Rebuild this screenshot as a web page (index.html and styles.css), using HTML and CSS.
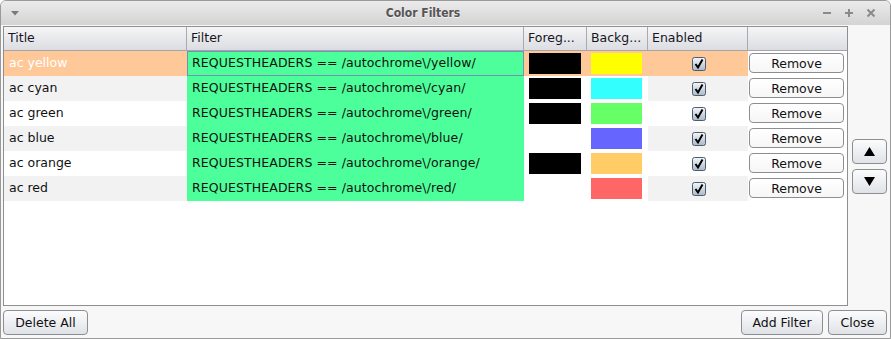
FILE: index.html
```html
<!DOCTYPE html>
<html>
<head>
<meta charset="utf-8">
<link rel="stylesheet" href="styles.css">
</head>
<body>
<div class="window">
  <div class="titlebar">
    <div class="tb-left">
      <svg width="8" height="5" viewBox="0 0 8 5"><path d="M0 0 H8 L4 4.5 Z" fill="#7a7a7a"/></svg>
    </div>
    <div class="tb-title">Color Filters</div>
    <div class="tb-right">
      <svg width="10" height="10" viewBox="0 0 10 10"><path d="M1 5 H9" stroke="#8a8a8a" stroke-width="2"/></svg>
      <svg width="10" height="10" viewBox="0 0 10 10"><path d="M1 5 H9 M5 1 V9" stroke="#8a8a8a" stroke-width="2"/></svg>
      <svg width="10" height="10" viewBox="0 0 10 10"><path d="M1.5 1.5 L8.5 8.5 M8.5 1.5 L1.5 8.5" stroke="#8a8a8a" stroke-width="2"/></svg>
    </div>
  </div>
  <div class="content">
    <div class="main">
      <div class="table">
        <div class="thead">
          <div class="th">Title</div>
          <div class="th">Filter</div>
          <div class="th">Foreg...</div>
          <div class="th">Backg...</div>
          <div class="th">Enabled</div>
          <div class="th last"></div>
        </div>
        <div class="tbody">
          <div class="row sel">
            <div class="td title">ac yellow</div>
            <div class="td filter focus">REQUESTHEADERS == /autochrome\/yellow/</div>
            <div class="td fg"><span class="sw fgsw" style="background:#000000"></span></div>
            <div class="td bg"><span class="sw bgsw" style="background:#ffff00"></span></div>
            <div class="td en"><svg class="cb" width="14" height="14" viewBox="0 0 14 14"><use href="#cbox"/></svg></div>
            <div class="td rm"><button class="btn remove">Remove</button></div>
          </div>
          <div class="row alt">
            <div class="td title">ac cyan</div>
            <div class="td filter">REQUESTHEADERS == /autochrome\/cyan/</div>
            <div class="td fg"><span class="sw fgsw" style="background:#000000"></span></div>
            <div class="td bg"><span class="sw bgsw" style="background:#33ffff"></span></div>
            <div class="td en"><svg class="cb" width="14" height="14" viewBox="0 0 14 14"><use href="#cbox"/></svg></div>
            <div class="td rm"><button class="btn remove">Remove</button></div>
          </div>
          <div class="row">
            <div class="td title">ac green</div>
            <div class="td filter">REQUESTHEADERS == /autochrome\/green/</div>
            <div class="td fg"><span class="sw fgsw" style="background:#000000"></span></div>
            <div class="td bg"><span class="sw bgsw" style="background:#66ff66"></span></div>
            <div class="td en"><svg class="cb" width="14" height="14" viewBox="0 0 14 14"><use href="#cbox"/></svg></div>
            <div class="td rm"><button class="btn remove">Remove</button></div>
          </div>
          <div class="row alt">
            <div class="td title">ac blue</div>
            <div class="td filter">REQUESTHEADERS == /autochrome\/blue/</div>
            <div class="td fg"></div>
            <div class="td bg"><span class="sw bgsw" style="background:#6666ff"></span></div>
            <div class="td en"><svg class="cb" width="14" height="14" viewBox="0 0 14 14"><use href="#cbox"/></svg></div>
            <div class="td rm"><button class="btn remove">Remove</button></div>
          </div>
          <div class="row">
            <div class="td title">ac orange</div>
            <div class="td filter">REQUESTHEADERS == /autochrome\/orange/</div>
            <div class="td fg"><span class="sw fgsw" style="background:#000000"></span></div>
            <div class="td bg"><span class="sw bgsw" style="background:#ffcc66"></span></div>
            <div class="td en"><svg class="cb" width="14" height="14" viewBox="0 0 14 14"><use href="#cbox"/></svg></div>
            <div class="td rm"><button class="btn remove">Remove</button></div>
          </div>
          <div class="row alt">
            <div class="td title">ac red</div>
            <div class="td filter">REQUESTHEADERS == /autochrome\/red/</div>
            <div class="td fg"></div>
            <div class="td bg"><span class="sw bgsw" style="background:#ff6666"></span></div>
            <div class="td en"><svg class="cb" width="14" height="14" viewBox="0 0 14 14"><use href="#cbox"/></svg></div>
            <div class="td rm"><button class="btn remove">Remove</button></div>
          </div>
        </div>
      </div>
      <div class="side">
        <button class="btn arrow"><svg width="11" height="9" viewBox="0 0 11 9"><path d="M5.5 0 L11 9 H0 Z" fill="#000"/></svg></button>
        <button class="btn arrow"><svg width="11" height="9" viewBox="0 0 11 9"><path d="M0 0 H11 L5.5 9 Z" fill="#000"/></svg></button>
      </div>
    </div>
    <div class="footer">
      <button class="btn fbtn delete">Delete All</button>
      <div class="spacer"></div>
      <button class="btn fbtn add">Add Filter</button>
      <button class="btn fbtn close">Close</button>
    </div>
  </div>
</div>
<svg width="0" height="0" class="defs">
  <defs>
    <linearGradient id="cbg" x1="0" y1="0" x2="0" y2="1">
      <stop offset="0" stop-color="#f4f7fa"/>
      <stop offset="1" stop-color="#a9b8c8"/>
    </linearGradient>
    <g id="cbox">
      <rect x="0.5" y="0.5" width="13" height="13" rx="2" fill="url(#cbg)" stroke="#4d5d6e"/>
      <path d="M3.5 7 L6 10.5 L10.5 2.5" fill="none" stroke="#000" stroke-width="2"/>
    </g>
  </defs>
</svg>
</body>
</html>
```

FILE: styles.css
```css
* { box-sizing: border-box; }
html, body { margin: 0; padding: 0; }
body {
  width: 891px;
  height: 339px;
  font-family: "DejaVu Sans", sans-serif;
  font-size: 12.5px;
  color: #111;
  background: #ffffff;
}
.defs { position: absolute; }
.window {
  width: 891px;
  height: 339px;
  border: 1px solid #9a9a9a;
  border-radius: 6px 6px 0 0;
  background: #f7f7f7;
  display: flex;
  flex-direction: column;
  overflow: hidden;
}
.titlebar {
  height: 24px;
  flex: none;
  display: flex;
  align-items: center;
  background: linear-gradient(#ebebeb, #d3d3d3);
}
.tb-left {
  width: 28px;
  padding-left: 10px;
  display: flex;
  align-items: center;
  padding-top: 1px;
}
.tb-title {
  flex: 1;
  text-align: center;
  font-family: "DejaVu Sans Condensed", "DejaVu Sans", sans-serif;
  font-stretch: condensed;
  font-size: 12px;
  font-weight: bold;
  color: #555;
  text-shadow: 0 1px 0 #f4f4f4;
  padding-right: 4px;
}
.tb-right {
  width: 69px;
  display: flex;
  gap: 12px;
  align-items: center;
  padding-left: 1px;
}
.content {
  flex: 1;
  display: flex;
  flex-direction: column;
  padding: 1px 2px 3px 2px;
}
.main {
  flex: 1;
  display: flex;
}
.table {
  width: 845px;
  border: 1px solid #8f8f8f;
  background: #fff;
  display: flex;
  flex-direction: column;
}
.thead, .row {
  display: grid;
  grid-template-columns: 183px 337px 63px 61px 100px 99px;
}
.thead {
  height: 23px;
  background: linear-gradient(#f5f5f7, #dcdde2);
  border-bottom: 1px solid #a5a6aa;
  box-sizing: content-box;
}
.th {
  border-right: 1px solid #a9aaae;
  padding-left: 4px;
  line-height: 22px;
  color: #161622;
  white-space: nowrap;
  overflow: hidden;
}
.th.last { border-right: none; }
.row { height: 25px; }
.td {
  height: 25px;
  line-height: 24px;
  white-space: nowrap;
  overflow: hidden;
}
.td.title { padding-left: 5px; }
.row.alt .title, .row.alt .en { background: #f2f2f2; }
.row.sel .title, .row.sel .fg, .row.sel .bg, .row.sel .en { background: #ffc898; }
.row.sel .title { color: #fff; }
.td.filter {
  background: #4dff9a;
  padding-left: 5px;
  letter-spacing: 0.1px;
}
.td.filter.focus {
  border: 1px solid #7b8fb6;
  padding-left: 4px;
  line-height: 22px;
}
.sw {
  display: block;
  height: 21px;
  margin-top: 2px;
}
.fgsw { width: 52px; margin-left: 5px; }
.bgsw { width: 51px; margin-left: 4px; }
.td.en {
  display: flex;
  align-items: center;
  justify-content: center;
  padding-left: 1px;
}
.td.rm { padding: 2px 3px 3px 1px; }
.btn {
  font-family: "DejaVu Sans", sans-serif;
  font-size: 12.5px;
  color: #111;
  border: 1px solid #8d8e91;
  border-radius: 4px;
  background: linear-gradient(#fcfcfd, #dfe2e7);
  padding: 0;
  margin: 0;
  display: flex;
  align-items: center;
  justify-content: center;
}
.btn.remove {
  width: 95px;
  height: 20px;
  background: linear-gradient(#ffffff, #f6f6f7);
}
.side {
  flex: 1;
  display: flex;
  flex-direction: column;
  justify-content: center;
  align-items: flex-start;
  gap: 5px;
  padding-left: 4px;
  padding-top: 1px;
}
.btn.arrow {
  width: 35px;
  height: 25px;
}
.footer {
  margin-top: 4px;
  height: 25px;
  display: flex;
  gap: 5px;
  padding-right: 1px;
}
.spacer { flex: 1; }
.fbtn { height: 25px; }
.delete { width: 85px; }
.add { width: 82px; }
.close { width: 59px; }
```
